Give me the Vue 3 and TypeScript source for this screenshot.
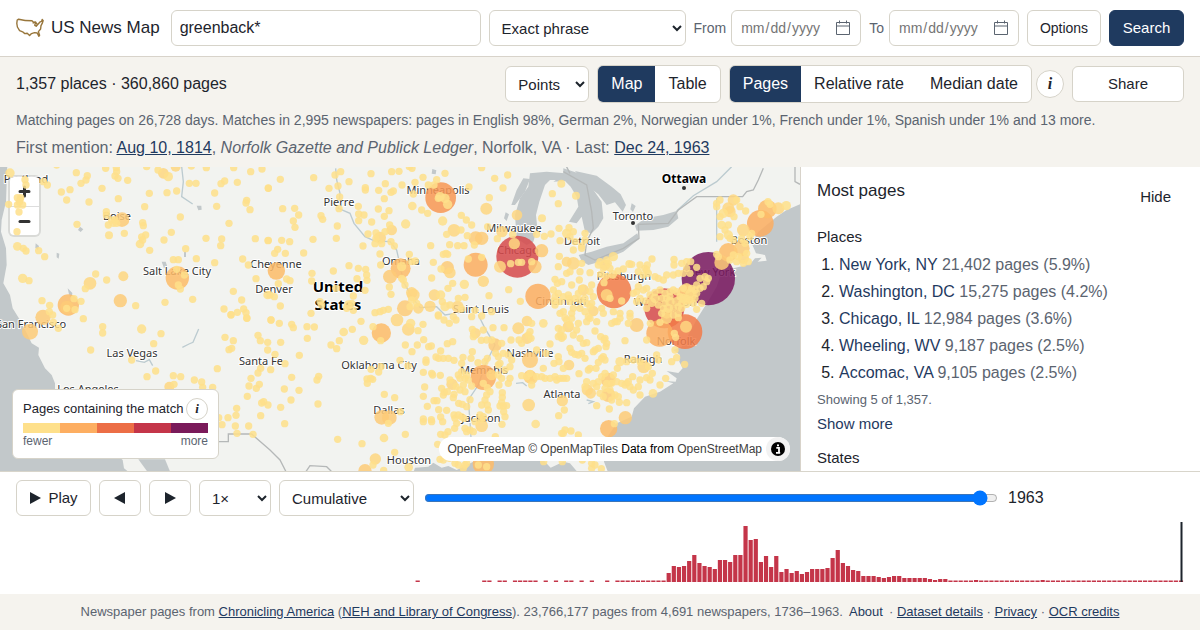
<script setup lang="ts">
import { ref } from 'vue'

interface Dot { x: number; y: number; r: number; fill: string }
interface Tile { x: number; y: number; dots: string }
interface Label { text: string; x: number; y: number; kind?: string }

const query = ref('greenback*')
const matchMode = ref('Exact phrase')
const display = ref('Points')
const view = ref('Map')
const metric = ref('Pages')
const speed = ref('1×')
const mode = ref('Cumulative')
const year = ref(1963)

const places = [
  { name: 'New York, NY', detail: '21,402 pages (5.9%)' },
  { name: 'Washington, DC', detail: '15,275 pages (4.2%)' },
  { name: 'Chicago, IL', detail: '12,984 pages (3.6%)' },
  { name: 'Wheeling, WV', detail: '9,187 pages (2.5%)' },
  { name: 'Accomac, VA', detail: '9,105 pages (2.5%)' },
]

const ramp = ['#fee08b', '#fdae61', '#ec6e46', '#c43549', '#7a1a5a']

// Map tiles, three units to a pixel. Each dot is "x,y" or "x,y,radius".
const tiles: Tile[] = [
  { x: 0, y: 0, dots: '30,24,14 75,44 78,60 52,98 62,98 58,112 68,120 52,120 60,105 26,118 57,141 51,200 52,244,13 70,250 78,258 116,257 134,275 142,60 130,50 68,340,14 87,347 287,327 256,371 320,345 170,0 229,23 243,55 262,32 258,45 210,74 184,81 200,105 267,111 306,70 317,10 350,20 345,33 354,40 383,46 349,8 355,101 319,140 319,150 325,180 340,175 335,165 350,175 345,165 366,164,22 231,178 327,211,12 373,205 440,5 474,15 490,25,16 505,35,14 527,5,15 574,3 619,8 568,55 588,55 530,78 501,83 448,85 434,125 428,173 430,182 437,210 425,216 420,237,13 428,225 449,256 492,225 514,202 541,156 557,251 520,284 535,284 589,281 644,293 618,220 665,222 662,242 687,175 650,124 740,106 738,114 750,134 644,84 663,56 674,48 712,52 701,8 752,20 786,12 805,70 766,221 804,227 728,282 745,300 768,341 700,379 725,405 672,432 693,449 712,442 731,432 738,443 741,460 803,390,13 578,403 495,412 407,422 126,407 149,421 243,409 250,461 148,440 158,450 222,401 225,434 200,430 541,372 535,360 530,313 553,330 270,355,19 370,334,15 361,407,20 205,420,32 201,427,20 129,457,23 532,339,35' },
  { x: 795, y: 0, dots: '10,69 46,43 146,38 192,70 219,63 227,20 210,30 252,50 301,68 301,75 318,26 341,76 361,56 380,20 402,19 358,101 378,82 385,78 411,60 433,5 441,10 450,52 474,37 445,87 515,44 540,25 507,60 490,60 224,96 222,131 53,131 89,130 101,150 85,168 90,187 168,152 173,163 217,183 214,220 144,223 280,124 281,147 297,150 281,167 320,171 340,132 372,137 358,154 422,177,14 374,180 380,195,16 309,207 333,204 333,220 330,236 350,236 345,218,18 360,200 378,230 388,243 294,243 10,226 50,226 74,230 38,253 29,265 61,265 116,264 442,123,13 470,135 488,145 533,168,14 589,151 604,165 620,180 567,196,19 545,208 588,195 497,242 554,239 578,242 597,242 607,212 632,220,21 650,220,20 628,240 612,66 689,40 714,69 728,30 650,8 673,98 664,131,18 668,185 756,150,16 711,200,17 697,221 743,209 672,392 731,374 766,409 655,349,17 345,267 347,300 433,268 451,288 440,290 252,302 205,318 280,310 302,313 305,330 306,346 276,341 300,376 212,370 141,325 140,348 265,393 260,415 265,436 245,430 250,420,14 138,445 165,410 170,420 65,342 75,347 40,356 46,423 18,465 28,395 15,390 373,366 378,388 375,335,21 415,345 420,360 410,340 330,443 345,440 355,436 370,433 420,430,24 440,383,17 445,390,19 440,405 455,415 435,425 460,430,16 495,424,17 508,390,17 527,390,14 532,410 540,425,14 520,450 505,292 528,312 547,308,20 555,323,17 535,268 548,268 543,265 500,339 563,355 549,370 598,358,14 580,400 600,397 578,425,18 555,420 590,432 620,455 650,453 630,436 680,440 650,277 610,282 527,98,46 525,95,14 540,100,14 548,118,14 520,100 407,310,30 410,305,14 34,318,26 632,299,36 757,275,63 748,236,17 737,296 760,292 770,292 705,305,18' },
  { x: 1590, y: 0, dots: '94,56,12 67,86 85,116 138,92,12 36,160,12 20,208 43,214 63,207 87,190 117,188 110,205,14 90,227 130,200 165,205 155,243 135,230 120,215 165,225 130,255 155,250 88,274 35,257,20 15,305,20 5,290 85,305 110,290,15 130,295,19 155,295 120,320 150,320 180,323 110,325 75,343 95,350 82,355 125,360 148,345 210,290 225,300,16 235,295 250,275,14 230,285 220,310 240,310 205,300 212,328 228,334 248,328,13 264,318 280,312 298,297,12 305,298 330,300 345,310 352,300 366,282 355,325 350,315 340,330 325,320 375,335 385,340 400,345 410,330 430,330 445,325 432,283 432,300 455,295 470,290 482,290 500,307 470,310 460,325 480,325 510,340 525,335 535,340 530,350 520,365 510,370 500,385 515,415 500,433 495,400 535,341,80 403,430,60 470,388,30 252,378,52 230,390,18 222,353 240,400 275,408 691,175,40 712,132,28 693,148 745,130,18 769,122,14 714,110 720,118 640,195,19 665,205 660,215 570,105 560,125 560,115 595,130,18 610,105,17 620,105 600,140,17 630,125 647,138 612,155 580,145,14 570,155 575,180,13 595,180 570,215 595,210,14 600,220 585,195 595,262,28 635,250,24 575,293,22 565,275 560,268 610,270 600,285 625,275 640,280,17 650,265 640,295 620,290 655,290 610,225 635,220 645,235 24,394,38 160,375,17 155,370 70,375 75,395 85,385 100,395 90,410 72,408 150,405 118,400 115,390 120,410 135,400 145,385 180,380 190,395 185,360 165,400 170,415 185,415 130,430 150,430 100,440 125,445 165,440 190,438,16 215,430 90,445 75,420 180,425 220,445 250,440 270,445 300,445 320,380 325,365 310,385 340,375 330,400 345,408 350,370 320,410 375,400,14 395,400 410,400 420,410,14 400,430 415,430,14 430,430 385,420 440,410,14 455,415 450,395 470,400 480,385,14 470,370,16 460,370 485,370 500,360 495,375 430,375 440,380 420,380 405,385 390,375 375,382 360,390 365,412,14 350,430 445,445 430,450 410,445,16 395,445 420,395 405,415 460,400,14 445,425 455,430 480,405 470,418 490,415' },
  { x: 0, y: 450, dots: '160,22 175,40 308,35 308,54 425,42,14 483,56 461,86 272,105 395,135 441,185 467,168 520,182 542,185 522,208 508,215,15 583,195 605,201 608,217 638,217 652,161 675,67 700,77 687,104 695,100 693,0 740,9 774,61 781,77 803,82 803,105 782,160 774,174 753,190 747,213 769,220 778,208 742,244 785,264 791,260 804,270 782,302 710,280 708,301 684,308 656,308 666,329 706,333 746,333 711,355 759,358 90,50,24' },
  { x: 795, y: 450, dots: '18,15 43,25 80,28 85,38 126,35 148,36 288,19 47,82 30,118 127,70 103,121 60,146 17,164 80,187 161,184 156,195 58,222 102,226 78,255 159,267 47,277 59,326 218,373 291,386 236,51,13 262,43 223,77 198,90 215,101 296,76,14 324,35 347,77 349,54,29 396,15,19 430,43,19 437,25,14 459,47 474,28 476,74 421,90 441,110 457,90 491,95 499,93 405,136 429,153 348,155 318,163 341,171 306,192 323,193 307,205 317,190 358,238 389,248 406,290 350,307,22 373,308,22 370,325 357,369,13 389,412 421,358 331,432,17 324,450 300,467,20 356,466 431,457,13 475,172 500,175 503,180 526,181 483,135 483,142 513,126 521,130 527,108 535,130 550,130 567,136 547,86 563,80 594,127 590,145 520,3 537,15 553,25 573,15 565,5 479,216 475,244 487,274 507,257 516,257 521,284 475,312 475,320 499,314 500,320 527,306 533,320 545,286 549,350 569,340 575,325 567,300 570,310 527,358 540,360 518,388 525,433 535,435 553,430 561,208,17 555,195 580,180 590,170 585,190 600,190 610,195 605,180 530,220 538,232 535,240 547,230 567,238 565,248 585,225 573,215 595,210 600,230 581,265 592,268 605,275 615,254 620,213 622,43 631,55,16 625,65 649,76 655,45 622,110 618,130 639,143 660,140 667,130 684,38 717,38 690,90,20 680,75 665,75 710,85 738,75 692,115 700,125 715,115 730,120 740,135 705,145 735,155 720,165 735,190 700,150 655,187,38 680,180,16 700,180 710,190 702,210 730,205 655,205 675,230 667,218 665,240 660,255 667,270 650,270 670,285 655,305 645,300 712,233 712,247 710,262 705,273 715,273 725,272 716,290 720,305 711,328 650,332,19 630,320 605,350 615,345 625,350 600,340 590,305 597,310 580,300 650,312 691,365 760,40,18 786,18,16 786,70,17 770,85 762,75 790,60 795,135,24 770,182 785,185 800,190,18 795,175 791,270,19 655,447,32 570,445 580,450 605,445 595,460 600,450 640,450 665,455' },
  { x: 1590, y: 450, dots: '5,25 40,25,13 0,50 3,70 60,87 20,105 48,115 85,125 40,160 72,145 87,140 100,160 117,150,16 90,60 95,70 100,65 95,45 85,40 115,35,17 110,15 105,8 125,10 120,30 145,25 140,45 130,60 150,70 85,65 170,20 180,10 175,5 200,20 195,48 160,85 170,83 120,100 125,112 135,118 155,115 165,130 145,120 147,176 175,165 180,160 198,160 215,130 220,125 225,135 205,142 190,110 205,100 195,105 212,65 222,75 228,95 230,85 225,70 245,25 255,20 262,20 270,10 295,25 300,5 320,30,21 285,77 350,75 262,160 270,140,14 290,140 310,135 330,140 341,155,19 380,120 385,135 355,155 367,175 308,185 330,195 350,188 360,195 325,215 330,240 369,235,13 390,210 407,190 435,105 440,128 425,140 464,148 0,185,20 20,185 35,185 45,190 60,190 75,185 80,195 90,190 100,190 110,190 5,210 97,257,17 103,285 86,302 17,327,13 105,345 95,355 100,355 123,348 145,360 170,200 165,215 172,225,17 182,235,16 190,205 205,200 200,215 215,185 235,195,22 225,175 230,205 245,205 250,180 210,235 220,245 235,240,21 245,255 255,240 265,245 200,272 238,282 268,262 290,263 225,220 260,200 275,205 290,205 285,210 300,215 310,225 295,200 240,225 286,308,20 236,341,26 253,326 185,445 185,460 195,450 214,461 41,440 97,440 157,435 389,55,40 465,50,52 468,35,18 433,55,11 437,67 361,25 390,22 410,10,17 445,8' },
]

function colourFor(r: number): string {
  if (r >= 75) return '#79195f'
  if (r >= 58) return '#d64a4c'
  if (r >= 50) return '#f27b48'
  if (r >= 45) return '#f89754'
  if (r >= 36) return '#fcae61'
  if (r >= 26) return '#fdbb69'
  if (r >= 20) return '#fdcb78'
  if (r >= 15) return '#fed681'
  return '#fee08b'
}

const dots: Dot[] = tiles
  .flatMap((tile) =>
    tile.dots.split(' ').map((entry) => {
      const [x, y, r = 11] = entry.split(',').map(Number)
      return { x: tile.x + x, y: tile.y + y, r, fill: colourFor(r) }
    }),
  )
  .sort((a, b) => b.r - a.r)

const labels: Label[] = [
  { text: 'Portland', x: 26, y: 183 },
  { text: 'Boise', x: 117, y: 220 },
  { text: 'Salt Lake City', x: 177, y: 275 },
  { text: 'Pierre', x: 339, y: 206 },
  { text: 'Minneapolis', x: 438, y: 194 },
  { text: 'Milwaukee', x: 514, y: 232 },
  { text: 'Chicago', x: 518, y: 254 },
  { text: 'Detroit', x: 582, y: 245 },
  { text: 'Toronto', x: 633, y: 220 },
  { text: 'Ottawa', x: 684, y: 183, kind: 'capital' },
  { text: 'Boston', x: 749, y: 244 },
  { text: 'New York', x: 711, y: 276 },
  { text: 'Pittsburgh', x: 624, y: 280 },
  { text: 'Washington', x: 665, y: 306 },
  { text: 'Cheyenne', x: 276, y: 268 },
  { text: 'Denver', x: 274, y: 293 },
  { text: 'Omaha', x: 401, y: 265 },
  { text: 'United', x: 338, y: 292, kind: 'country' },
  { text: 'States', x: 338, y: 310, kind: 'country' },
  { text: 'Saint Louis', x: 481, y: 313 },
  { text: 'Cincinnati', x: 561, y: 305 },
  { text: 'San Francisco', x: 31, y: 328 },
  { text: 'Las Vegas', x: 132, y: 357 },
  { text: 'Los Angeles', x: 88, y: 393 },
  { text: 'Santa Fe', x: 261, y: 365 },
  { text: 'Oklahoma City', x: 379, y: 369 },
  { text: 'Dallas', x: 389, y: 414 },
  { text: 'Houston', x: 409, y: 464 },
  { text: 'Memphis', x: 484, y: 374 },
  { text: 'Jackson', x: 481, y: 422 },
  { text: 'Nashville', x: 530, y: 357 },
  { text: 'Atlanta', x: 562, y: 398 },
  { text: 'Raleigh', x: 643, y: 363 },
  { text: 'Norfolk', x: 676, y: 345 },
]

// Bar heights by year, in pixels; years left out have no pages.
const firstYear = 1736
const heights = new Map<number, number>()
for (const i of [78, 91, 92, 94, 95, 97, 98, 99, 100, 101, 103, 105, 107, 108, 110, 112, 115]) heights.set(i, 1.5)
for (let i = 117; i <= 126; i++) heights.set(i, 1.5)
const busy = [9, 16, 15, 16, 21, 27, 19, 16, 15, 13, 22, 22, 20, 27, 27, 56, 42, 43, 20, 26, 15, 26, 10, 13, 9, 11, 8, 10, 13, 13, 13, 14, 24, 32, 19, 16, 12, 11, 6, 6, 6, 5, 4, 5, 6, 6, 4, 4, 4, 4, 4, 3, 2, 3, 3]
busy.forEach((h, n) => heights.set(127 + n, h))
for (let i = 182; i <= 227; i++) heights.set(i, i === 187 || i === 200 ? 2 : 1.5)
const step = 1168 / 228
const bars = [...heights].map(([i, h]) => ({ year: firstYear + i, x: i * step, h }))
</script>

<template>
  <div class="page">
    <header class="topbar">
      <a class="brand" href="#">
        <svg class="logo" viewBox="0 0 28 20" aria-hidden="true">
          <path d="M1.2 2 L2.6 1.2 Q9 2.8 16 2.8 L17.5 4.2 L19.5 4 L21.5 6.8 L24.2 3.8 L25.6 3.4 L26.2 1.4 L27.2 2.6 L26.2 5.4 L25 7.6 L24.6 11 L22.4 13.6 L23.6 17.2 L22.8 18.2 L21.2 15 L18.5 14.6 L15.5 15.6 L13.6 17.6 L11.2 15.2 L8.8 15.6 L6.6 13.8 L3.6 12.6 L1.4 9 L.8 5.4 Z M17.5 4.2 L17 5.6 M19.5 4 L18.8 7.4 L20.2 8.2 L21.5 6.8" />
        </svg>
        <span>US News Map</span>
      </a>
      <input v-model="query" class="control query" type="text" aria-label="Search words" />
      <select v-model="matchMode" class="control match" aria-label="Match type">
        <option>Exact phrase</option>
        <option>All words</option>
      </select>
      <div v-for="edge in ['From', 'To']" :key="edge" class="date">
        <label :for="'date-' + edge">{{ edge }}</label>
        <span class="date-box">
          <input :id="'date-' + edge" class="control" type="date" />
          <svg viewBox="0 0 16 16" aria-hidden="true">
            <path d="M1.5 2.5h13v12h-13zM1.5 6h13M4.5 .5v3M11.5 .5v3" />
          </svg>
        </span>
      </div>
      <button class="control options" type="button">Options</button>
      <button class="control search" type="submit">Search</button>
    </header>

    <section class="summary">
      <div class="summary-row">
        <p class="count">1,357 places · 360,860 pages</p>
        <select v-model="display" class="control display" aria-label="Display">
          <option>Points</option>
          <option>Counties</option>
        </select>
        <div class="segments">
          <button v-for="item in ['Map', 'Table']" :key="item" type="button" :class="{ active: view === item }" @click="view = item">{{ item }}</button>
        </div>
        <div class="metric">
          <div class="segments">
            <button v-for="item in ['Pages', 'Relative rate', 'Median date']" :key="item" type="button" :class="{ active: metric === item }" @click="metric = item">{{ item }}</button>
          </div>
          <button class="info" type="button" aria-label="About this measure">i</button>
        </div>
        <button class="control share" type="button">Share</button>
      </div>
      <p class="languages">Matching pages on 26,728 days. Matches in 2,995 newspapers: pages in English 98%, German 2%, Norwegian under 1%, French under 1%, Spanish under 1% and 13 more.</p>
      <p class="mentions">First mention: <a href="#">Aug 10, 1814</a>, <em>Norfolk Gazette and Publick Ledger</em>, Norfolk, VA · Last: <a href="#">Dec 24, 1963</a></p>
    </section>

    <main class="content">
      <div class="map">
        <svg class="layer" viewBox="0 167 800 304" preserveAspectRatio="xMidYMid slice" aria-hidden="true">
          <g transform="translate(0 165) scale(.33333)">
            <g class="water">
              <path d="M0 0H22L18 110 5 165 3 200 18 250 20 300 10 355 30 390 38 430 60 465 78 500 95 535 117 548 115 570 135 610 155 630 165 655 165 690 260 720 300 780 340 860 368 885 372 910 390 924H0Z" />
              <path d="M415 883H495L512 924H445Z" />
              <path d="M1240 924L1245 908 1285 905 1300 893 1325 908 1345 903 1370 915 1420 890 1480 885 1590 885 1630 885 1652 908 1690 890 1710 895 1735 924Z" />
              <path d="M1825 924L1812 890 1820 820 1850 775 1895 755 1902 730 1935 695 1980 680 2020 655 1995 648 2027 650 2030 640 2000 618 2035 624 2048 610 2038 590 2040 570 2020 555 2045 545 2060 520 2092 460 2130 400 2150 365 2160 335 2200 310 2250 298 2265 280 2285 278 2273 290 2300 287 2295 270 2268 265 2255 235 2275 200 2300 180 2330 155 2360 135 2400 118V924Z" />
              <path d="M1590 25L1640 20 1695 25 1715 30 1695 45 1650 45 1635 60 1618 110 1608 150 1612 190 1600 230 1580 240 1550 220 1545 150 1560 100 1585 65Z" />
              <path d="M1570 40L1590 42 1575 80 1545 120 1534 120 1550 75ZM1517 142l10 6-7 20-8-8Z" />
              <path d="M1690 10L1735 25 1770 60 1805 110 1810 160 1795 185 1775 205 1755 200 1745 155 1730 175 1707 170 1735 125 1730 95 1712 65 1695 48 1660 50 1690 30Z" />
              <path d="M1725 18L1790 32 1835 65 1862 88 1878 120 1868 140 1845 112 1820 120 1795 88 1760 60Z" />
              <path d="M1736 270L1775 260 1820 245 1870 235 1912 205 1917 222 1870 260 1800 290 1765 300 1745 288Z" />
              <path d="M1755 220h14v18l-14-4Z" />
              <path d="M1905 182L1935 160 1990 150 2030 138 2035 160 2005 185 1960 195 1910 197Z" />
              <path d="M1895 115l12 8-8 18-8-8ZM1297 12l12 4-2 12-12-2ZM240 185l10 8-8 8-8-6ZM107 235l10 8-3 12-8-6ZM170 263l8 3-2 15-6-4ZM203 370l14 14-2 18-8-14ZM485 290h12l5 15-10 5ZM552 260h6v16h-6ZM590 122l14 0 1 12-10 2Z" />
            </g>
            <path class="river" d="M545 5L550 50 545 95 578 117M547 547l20-10 12-5 17-40M408 587l25 5 15-8 10 18M1007 10L1010 45 1020 85 1015 130 1050 145 1062 175 1095 215 1125 228 1170 230 1190 255 1200 300 1210 350 1235 395 1260 428 1310 425 1335 450 1400 440M1435 450L1455 490 1485 540 1455 600 1435 660 1405 705 1410 770 1415 850M1548 655l20-2 12 10M2030 138L2080 92 2150 50 2195 5M2150 100v130M1760 705l20 5-15 6" />
            <path class="border" d="M655 830H685V807H755L810 855 840 885 860 924M915 924L930 902 980 905 995 920M1690 20L1760 60 1775 140 1780 190 1760 230 1755 270 1785 285 1870 250 1917 220 1915 178 2005 175 2035 135 2090 95H2228L2240 80 2260 75 2275 45 2290 10M2385 0V50L2400 58M1697 0L1710 25" />
          </g>
          <g class="labels">
            <text v-for="item in labels" :key="item.text" :x="item.x" :y="item.y" :class="item.kind">{{ item.text }}</text>
            <circle cx="684" cy="188" r="2" />
            <circle cx="633" cy="223" r="2" />
          </g>
        </svg>
        <div class="zoom">
          <button type="button" aria-label="Zoom in"><svg viewBox="0 0 29 29"><path d="M10 14.5h9M14.5 10v9" /></svg></button>
          <button type="button" aria-label="Zoom out"><svg viewBox="0 0 29 29"><path d="M10 14.5h9" /></svg></button>
        </div>
        <svg class="layer points" viewBox="0 167 800 304" preserveAspectRatio="xMidYMid slice" aria-hidden="true">
          <g transform="translate(0 165) scale(.33333)">
            <circle v-for="(dot, n) in dots" :key="n" :cx="dot.x" :cy="dot.y" :r="dot.r" :fill="dot.fill" />
          </g>
        </svg>
        <div class="legend">
          <div class="legend-title">
            <span>Pages containing the match</span>
            <button class="info small" type="button" aria-label="About the legend">i</button>
          </div>
          <div class="ramp"><span v-for="colour in ramp" :key="colour" :style="{ background: colour }"></span></div>
          <div class="legend-ends"><span>fewer</span><span>more</span></div>
        </div>
        <div class="attribution">
          <span><a href="#">OpenFreeMap</a> <a href="#">© OpenMapTiles</a> Data from <a href="#">OpenStreetMap</a></span>
          <button type="button" aria-label="Toggle attribution">
            <svg viewBox="0 0 24 24"><circle cx="12" cy="12" r="7" /><path d="M10.3 10.8h2.7v4.8M10 15.8h4.2M11 8.3h2" /></svg>
          </button>
        </div>
      </div>

      <aside class="ranking">
        <div class="ranking-head">
          <h2>Most pages</h2>
          <button type="button">Hide</button>
        </div>
        <h3>Places</h3>
        <ol>
          <li v-for="place in places" :key="place.name"><a href="#">{{ place.name }}</a> <span>{{ place.detail }}</span></li>
        </ol>
        <p class="showing">Showing 5 of 1,357.</p>
        <button class="more" type="button">Show more</button>
        <h3>States</h3>
      </aside>
    </main>

    <section class="timeline">
      <div class="player">
        <button class="control play" type="button"><svg viewBox="0 0 12 12"><path d="M1 0L12 6 1 12Z" /></svg>Play</button>
        <button class="control step" type="button" aria-label="Previous year"><svg viewBox="0 0 12 12"><path d="M11 0L0 6 11 12Z" /></svg></button>
        <button class="control step" type="button" aria-label="Next year"><svg viewBox="0 0 12 12"><path d="M1 0L12 6 1 12Z" /></svg></button>
        <select v-model="speed" class="control speed" aria-label="Speed">
          <option>1×</option>
          <option>2×</option>
        </select>
        <select v-model="mode" class="control mode" aria-label="Mode">
          <option>Cumulative</option>
          <option>By year</option>
        </select>
        <input id="year" v-model.number="year" type="range" min="1736" max="1967" aria-label="Year" />
        <output for="year">{{ year }}</output>
      </div>
      <svg class="histogram" viewBox="0 0 1168 60" preserveAspectRatio="none" role="img" aria-label="Pages by year">
        <rect v-for="bar in bars" :key="bar.year" :x="bar.x" :y="60 - bar.h" width="4.2" :height="bar.h" />
        <rect class="cursor" x="1164.5" y="0" width="2" height="60" />
      </svg>
    </section>

    <footer class="foot">
      <p>Newspaper pages from <a href="#">Chronicling America</a> (<a href="#">NEH and Library of Congress</a>). 23,766,177 pages from 4,691 newspapers, 1736–1963.</p>
      <button type="button">About</button>
      <p>· <a href="#">Dataset details</a> · <a href="#">Privacy</a> · <a href="#">OCR credits</a></p>
    </footer>
  </div>
</template>

<style>
body { margin: 0; }
</style>

<style scoped>
.page {
  display: flex;
  flex-direction: column;
  height: 100vh;
  background: #fff;
  color: #1d242c;
  font: 16px/24px "Liberation Sans", Arial, sans-serif;
}
.page *, .page *::before { box-sizing: border-box; }
p, h2, h3, ol { margin: 0; }
button, input, select { font: inherit; color: inherit; margin: 0; }
a { color: #1f3a5f; }
.control {
  height: 36px;
  border: 1px solid #d6d3c9;
  border-radius: 6px;
  background: #fff;
  font-size: 15px;
}
select.control { padding: 0 0 0 8px; }

.topbar {
  display: flex;
  align-items: center;
  gap: 8px;
  padding: 10px 16px;
  border-bottom: 1px solid #d8d3ca;
}
.brand {
  display: flex;
  align-items: center;
  gap: 7px;
  margin-right: 3px;
  color: #1d242c;
  font-size: 17px;
  text-decoration: none;
  white-space: nowrap;
}
.logo { width: 28px; height: 20px; fill: none; stroke: #98763b; stroke-width: 1.4; stroke-linejoin: round; }
.query { flex: 1; min-width: 0; padding: 0 8px; font-size: 16px; }
.match { width: 197px; }
.date { display: flex; align-items: center; gap: 5px; color: #5b6470; font-size: 14px; }
.date-box { position: relative; display: flex; }
.date-box input { width: 130px; padding: 0 8px; color: #757575; font-size: 14px; }
.date-box input::-webkit-calendar-picker-indicator { opacity: 0; }
.date-box svg {
  position: absolute;
  top: 10px;
  right: 10px;
  width: 16px;
  height: 16px;
  fill: none;
  stroke: #5b6470;
  pointer-events: none;
}
.options { width: 74px; padding: 0; font-size: 14px; }
.search { width: 75px; padding: 0; border-color: #1f3a5f; background: #1f3a5f; color: #fff; }

.summary { padding: 8px 16px 7px; background: #f5f3ee; }
.summary-row { display: flex; align-items: center; gap: 8px; }
.count { flex: 1; }
.display { width: 84px; }
.segments {
  display: flex;
  height: 38px;
  overflow: hidden;
  border: 1px solid #d6d3c9;
  border-radius: 6px;
  background: #fff;
}
.segments button { padding: 0 13px; border: 0; background: none; font-size: 16px; }
.segments .active { background: #1f3a5f; color: #fff; }
.metric { display: flex; align-items: center; gap: 4px; }
.info {
  width: 28px;
  height: 28px;
  padding: 0;
  border: 1px solid #d6d3c9;
  border-radius: 50%;
  background: #fff;
  font: italic bold 16px/24px "Liberation Serif", serif;
}
.share { width: 112px; }
.languages { margin-top: 5px; color: #5b6470; font-size: 14px; line-height: 24px; }
.mentions { margin-top: 3px; color: #5b6470; line-height: 25px; }
.languages, .mentions { white-space: nowrap; }

.content {
  display: grid;
  flex: 1;
  grid-template-columns: minmax(0, 2fr) minmax(0, 1fr);
  grid-template-rows: minmax(0, 1fr);
  min-height: 0;
  border-bottom: 1px solid #d8d5cb;
}
.map { position: relative; overflow: hidden; background: #f2f3f0; }
.layer { position: absolute; width: 100%; height: 100%; }
.water { fill: #c2c8ca; }
.river { fill: none; stroke: #bccbd0; stroke-width: 4; }
.border { fill: none; stroke: #b5b8b8; stroke-width: 4; }
.labels { fill: #333; font: 11px "Noto Sans", sans-serif; text-anchor: middle; }
.labels text { paint-order: stroke; stroke: #fff; stroke-width: 2; stroke-linejoin: round; }
.labels .country { fill: #000; font-size: 15px; font-weight: 700; }
.labels .capital { fill: #000; font-size: 12px; font-weight: 700; }
.points { pointer-events: none; }
.points circle { opacity: .86; }
.zoom {
  position: absolute;
  top: 10px;
  left: 10px;
  display: flex;
  flex-direction: column;
  border-radius: 4px;
  background: #fff;
  box-shadow: 0 0 0 2px rgba(0, 0, 0, .1);
}
.zoom button { width: 29px; height: 29px; padding: 0; border: 0; background: none; }
.zoom button + button { border-top: 1px solid #ddd; }
.zoom svg { display: block; width: 29px; height: 29px; stroke: #333; stroke-width: 3; stroke-linecap: round; }
.legend {
  position: absolute;
  bottom: 12px;
  left: 12px;
  width: 207px;
  padding: 8px 10px;
  border: 1px solid #d6d3c9;
  border-radius: 6px;
  background: #fff;
  font-size: 12px;
  line-height: 16px;
}
.legend-title { display: flex; align-items: center; justify-content: space-between; font-size: 13px; white-space: nowrap; }
.info.small { width: 22px; height: 22px; font-size: 13px; line-height: 18px; }
.ramp { display: flex; height: 10px; margin-top: 3px; }
.ramp span { flex: 1; }
.legend-ends { display: flex; justify-content: space-between; margin-bottom: 1px; color: #5b6470; }
.attribution {
  position: absolute;
  right: 10px;
  bottom: 10px;
  display: flex;
  align-items: center;
  gap: 4px;
  height: 24px;
  padding-left: 8px;
  border-radius: 12px;
  background: #fff;
  color: #000;
  font-size: 12px;
  line-height: 20px;
  white-space: nowrap;
}
.attribution a { color: #404040; text-decoration: none; }
.attribution button { width: 24px; height: 24px; padding: 0; border: 0; border-radius: 12px; background: #f2f2f2; }
.attribution svg { display: block; width: 24px; height: 24px; }
.attribution path { fill: none; stroke: #fff; stroke-width: 1.8; }

.ranking { padding: 12px 16px 0; overflow-y: auto; scrollbar-width: none; border-left: 1px solid #d8d3ca; }
.ranking-head { display: flex; align-items: flex-start; justify-content: space-between; }
h2 { font-size: 17px; font-weight: 400; }
h3 { margin-top: 10px; font-size: 15px; font-weight: 400; }
.ranking-head button { height: 36px; padding: 0 13px; border: 0; background: none; font-size: 15px; }
ol { margin-top: 2px; padding-left: 22px; line-height: 27px; }
ol a { text-decoration: none; }
ol span { color: #5b6470; }
.showing { margin-top: 2px; color: #5b6470; font-size: 13px; }
.more { display: block; height: 24px; padding: 0; border: 0; background: none; color: #1f3a5f; font-size: 15px; }

.timeline { padding: 8px 16px 12px; }
.player { display: flex; align-items: center; gap: 8px; }
.player svg { width: 12px; height: 12px; fill: #1d242c; }
.play { display: flex; align-items: center; justify-content: center; gap: 7px; width: 75px; padding: 0; }
.step { display: flex; align-items: center; justify-content: center; width: 42px; padding: 0; }
.speed { width: 72px; }
.mode { width: 135px; }
.player input { flex: 1; min-width: 0; margin: 2px; }
output { width: 176px; }
.histogram { display: block; width: 100%; height: 60px; margin-top: 6px; fill: #c43549; }
.histogram .cursor { fill: #1d242c; }

.foot {
  display: flex;
  justify-content: center;
  gap: 6px;
  padding: 6px 16px;
  background: #f5f3ee;
  color: #5b6470;
  font-size: 13px;
  white-space: nowrap;
}
.foot button { padding: 0; border: 0; background: none; color: #1f3a5f; }
</style>
